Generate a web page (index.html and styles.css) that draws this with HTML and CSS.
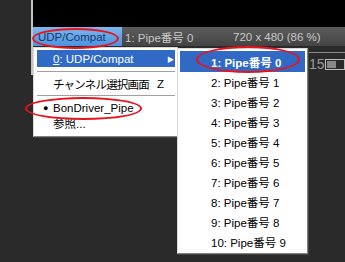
FILE: index.html
```html
<!DOCTYPE html>
<html lang="ja">
<head>
    <meta charset="UTF-8">
    <title>TVTest</title>
    <link rel="stylesheet" href="styles.css">
</head>
<body>
    <div class="window">
        <div class="video"></div>
        <div class="status">
            <div class="status-source">UDP/Compat</div>
            <div class="status-channel">1: Pipe番号 0</div>
            <div class="status-video">720 x 480 (86 %)</div>
        </div>
        <div class="toolbar">
            <span class="volume-label">15</span>
            <span class="slider"><span class="slider-fill"></span></span>
        </div>
    </div>

    <div class="menu main-menu">
        <div class="item item-active item-sub"><span><u>0</u>: UDP/Compat</span><span class="arrow">&#9654;</span></div>
        <div class="sep"></div>
        <div class="item"><span class="jp">チャンネル選択画面</span><span class="key">Z</span></div>
        <div class="sep"></div>
        <div class="item"><span class="bullet">&#9679;</span>BonDriver_Pipe</div>
        <div class="item">参照...</div>
    </div>

    <div class="menu sub-menu">
        <div class="sub-item sub-active">1: Pipe番号 0</div>
        <div class="sub-item">2: Pipe番号 1</div>
        <div class="sub-item">3: Pipe番号 2</div>
        <div class="sub-item">4: Pipe番号 3</div>
        <div class="sub-item">5: Pipe番号 4</div>
        <div class="sub-item">6: Pipe番号 5</div>
        <div class="sub-item">7: Pipe番号 6</div>
        <div class="sub-item">8: Pipe番号 7</div>
        <div class="sub-item">9: Pipe番号 8</div>
        <div class="sub-item">10: Pipe番号 9</div>
    </div>

    <div class="mark mark-status"></div>
    <div class="mark mark-pipe"></div>
    <div class="mark mark-driver"></div>
</body>
</html>
```

FILE: styles.css
```css
body {
    margin: 0;
    width: 345px;
    height: 262px;
    overflow: hidden;
    position: relative;
    background-color: #2a2a2a;
    font-family: "Liberation Sans", "Noto Sans CJK JP", sans-serif;
    font-size: 11.5px;
}
.window {
    margin-left: 31px;
    border-left: 2px solid #c4c4c4;
}
.video {
    height: 27px;
    background-color: #000;
}
.status {
    display: flex;
    height: 19px;
    align-items: center;
    background: linear-gradient(#5c5c5c, #444);
    color: #c8c8c8;
}
.status > div {
    height: 100%;
    display: flex;
    align-items: center;
    box-sizing: border-box;
    white-space: nowrap;
}
.status-source {
    width: 89px;
    padding-left: 5px;
    background: linear-gradient(#7cb8f0, #4c92e0);
    color: #1d3466;
}
.status-channel {
    width: 111px;
    padding-left: 3px;
}
.toolbar {
    display: flex;
    align-items: center;
    margin-top: 6px;
    height: 22px;
    padding-left: 276px;
    border-top: 1px solid #8a8a8a;
    color: #9a9a9a;
    font-size: 14px;
}
.volume-label {
    width: 18px;
}
.slider {
    display: block;
    width: 30px;
    height: 7px;
    border: 1px solid #bbb;
    padding: 1px;
}
.slider-fill {
    display: block;
    height: 100%;
    width: 60%;
    background-color: #888;
}

/* popup menus */
.menu {
    position: absolute;
    background-color: #fff;
    border: 1px solid #d8d8d8;
    border-right-color: #808080;
    border-bottom-color: #808080;
    box-shadow: 1px 1px 0 #404040;
    box-sizing: border-box;
    color: #000;
}
.main-menu {
    left: 33px;
    top: 47px;
    width: 145px;
    height: 90px;
    padding: 2px 2px 0 3px;
}
.item {
    display: flex;
    align-items: center;
    height: 15px;
    padding-left: 16px;
    white-space: nowrap;
}
.item-active {
    height: 17px;
    background-color: #316ac5;
    color: #fff;
}
.item-sub {
    justify-content: space-between;
    padding-right: 1px;
}
.arrow {
    font-size: 7px;
}
.jp {
    letter-spacing: -0.8px;
}
.key {
    margin-left: 8px;
}
.bullet {
    margin-left: -10px;
    width: 10px;
    font-size: 9px;
}
.sep {
    height: 9px;
    display: flex;
    align-items: center;
}
.sep::before {
    content: "";
    flex: 1;
    border-top: 1px solid #a0a0a0;
    border-bottom: 1px solid #fff;
}
.sub-menu {
    left: 177px;
    top: 48px;
    width: 131px;
    height: 206px;
    padding: 2px 2px 0 2px;
}
.sub-item {
    display: flex;
    align-items: center;
    height: 20px;
    padding-left: 31px;
    white-space: nowrap;
}
.sub-active {
    height: 21px;
    background-color: #316ac5;
    color: #fff;
    font-weight: bold;
}

/* red annotation ellipses */
.mark {
    position: absolute;
    border: 2px solid #e8141c;
    border-radius: 50%;
    box-sizing: border-box;
}
.mark-status {
    left: 32px;
    top: 28px;
    width: 87px;
    height: 21px;
}
.mark-pipe {
    left: 196px;
    top: 46px;
    width: 104px;
    height: 27px;
}
.mark-driver {
    left: 25px;
    top: 97px;
    width: 117px;
    height: 23px;
}
```
